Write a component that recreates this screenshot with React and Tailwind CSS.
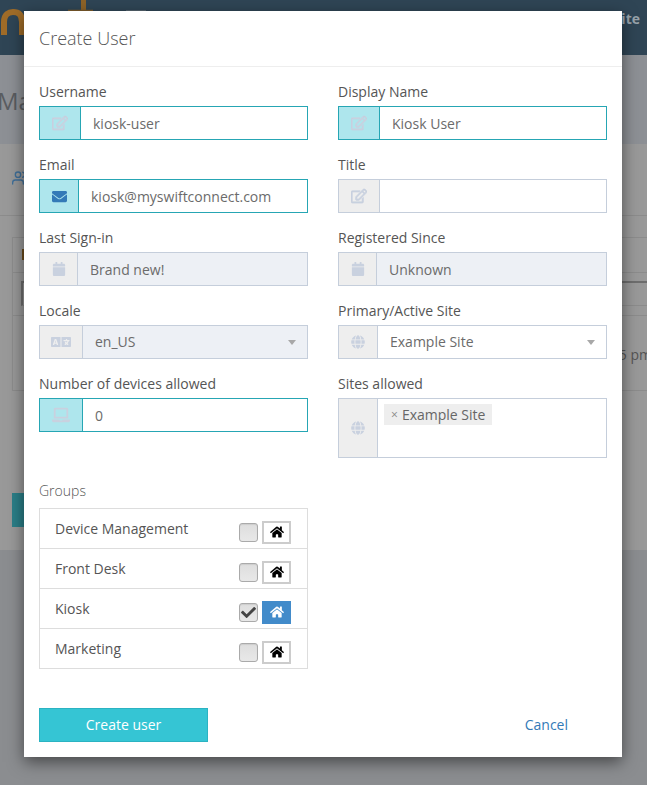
import React from "react";
import { FaRegEdit, FaEnvelope, FaCalendar, FaLanguage, FaLaptop, FaGlobe, FaHome, FaCheck } from "react-icons/fa";
import { FiUsers } from "react-icons/fi";

function Field({ label, icon, addon, value, active, disabled, select, children, tall }) {
  const border = active ? "border-[#26a6b4]" : "border-[#c5cedb]";
  return (
    <div className="flex flex-col">
      <label className="h-[21px] pt-px mb-1 text-sm leading-5 text-[#555]">{label}</label>
      <div className={`flex border ${border} ${tall ? "h-[60px]" : "h-[34px]"}`}>
        <div
          className={`flex items-center justify-center shrink-0 border-r ${border} ${active ? "bg-[#aee6ed]" : "bg-[#eeeeee]"}`}
          style={{ width: addon }}
        >
          {icon}
        </div>
        {children ? (
          children
        ) : (
          <div className={`relative flex-1 flex items-center pl-3 text-sm text-[#6b6b6b] ${select ? "" : "pt-px"} ${disabled ? "bg-[#edf0f5]" : "bg-white"}`}>
            {value}
            {select ? (
              <span className="absolute right-[11px] top-[14px] w-0 h-0 border-x-4 border-t-[5px] border-x-transparent border-t-[#a8a8a8]" />
            ) : null}
          </div>
        )}
      </div>
    </div>
  );
}

const ic = "text-[#c9d1df]";

function GroupRow({ name, checked, last }) {
  return (
    <div className={`flex items-center pl-[15px] pr-4 ${last ? "h-[39px]" : "h-10 border-b border-[#dddddd]"}`}>
      <span className="flex-1 text-sm text-[#555]">{name}</span>
      <span
        className={`flex items-center justify-center w-[19px] h-[19px] mt-[7px] rounded-[3px] border border-[#aaaaaa] bg-gradient-to-b from-[#dedede] to-[#e8e8e8] shadow-[inset_0_1px_1px_rgba(0,0,0,0.08)] mr-[4px]`}
      >
        {checked ? <FaCheck className="text-[#444] text-[15px]" /> : null}
      </span>
      <span
        className={`flex items-center justify-center w-[29px] h-[23px] mt-[7px] ${checked ? "bg-[#428bca]" : "bg-white border-2 border-[#cccccc]"}`}
      >
        <FaHome className={`text-[14px] ${checked ? "text-white" : "text-black"}`} />
      </span>
    </div>
  );
}

const thick = { stroke: "currentColor", strokeWidth: 22 };

export default function App() {
  return (
    <div className="relative w-[647px] h-[785px] overflow-hidden flex flex-col bg-[#8b8d90] font-['Open_Sans',sans-serif]">
      {/* page behind the dialog */}
      <header className="h-[55px] shrink-0 bg-[#2f4555] flex items-start justify-between overflow-hidden">
        <svg width="150" height="40" viewBox="0 0 150 40" className="shrink-0">
          <path d="M4 35V22C4 14 9 12 13 12C18 12 22 14 22 22V35" fill="none" stroke="#a06c28" strokeWidth="6" />
          <path d="M83.500 0V11" fill="none" stroke="#8d6328" strokeWidth="5" />
          <path d="M68 10.500H93" fill="none" stroke="#7d5c2c" strokeWidth="1.500" />
          <rect x="126" y="10" width="20" height="2" fill="#55636e" />
        </svg>
        <span className="mt-[9px] mr-[7px] text-sm font-bold text-[#98a3ab]">Site</span>
      </header>
      <div className="h-[89px] shrink-0 bg-[#8d9095] pt-[30px] text-2xl text-[#5a5d61] whitespace-nowrap">
        <span className="-ml-[3px] block">Ma</span>
      </div>
      <main className="h-[406px] shrink-0 bg-[#999999] flex flex-col">
        <div className="h-[72px] shrink-0 border-b border-[#8c8c8c] pl-3 pt-[26px]">
          <FiUsers className="text-[#3f6f99] text-[16px]" />
        </div>
        <div className="mt-[21px] ml-3 -mr-3 h-[154px] shrink-0 border border-[#8c8c8c] flex flex-col">
          <div className="h-[35px] shrink-0 border-b border-[#8c8c8c] pl-[9px] pt-[11px]">
            <div className="w-[4px] h-[11px] bg-[#6c4c1c]" />
          </div>
          <div className="h-[43px] shrink-0 border-b border-[#8c8c8c] pt-[8px] pl-[8px]">
            <div className="h-[25px] border-t-2 border-l-2 border-[#6e6e6e] border-b border-b-[#8c8c8c]" />
          </div>
          <div className="flex-1 flex items-start justify-end pt-[29px] pr-[6px] text-sm text-[#555]">
            <span className="whitespace-nowrap">5 pm</span>
          </div>
        </div>
        <div className="mt-[102px] ml-3 w-[40px] h-[34px] shrink-0 bg-[#2b7f88]" />
      </main>

      {/* dialog */}
      <div className="absolute left-[24px] top-[11px] w-[598px] h-[746px] bg-white shadow-[0_5px_15px_rgba(0,0,0,0.5)] flex flex-col">
        <div className="h-[56px] shrink-0 border-b border-[#eeeeee] pl-[15px] pb-[2px] flex items-center text-lg font-light text-[#555]">
          Create User
        </div>
        <div className="flex flex-col px-[15px] pt-[14px]">
          <div className="grid grid-cols-2 gap-x-[30px] gap-y-[14px] items-start">
            <Field label="Username" addon={41} active value="kiosk-user" icon={<FaRegEdit {...thick} className={`${ic} text-[16px]`} />} />
            <Field label="Display Name" addon={41} active value="Kiosk User" icon={<FaRegEdit {...thick} className={`${ic} text-[16px]`} />} />
            <Field label="Email" addon={39} active value="kiosk@myswiftconnect.com" icon={<FaEnvelope className="text-[#337ab7] text-[15px]" />} />
            <Field label="Title" addon={41} value="" icon={<FaRegEdit {...thick} className={`${ic} text-[16px]`} />} />
            <Field label="Last Sign-in" addon={38} disabled value="Brand new!" icon={<FaCalendar className={`${ic} text-[14px]`} />} />
            <Field label="Registered Since" addon={38} disabled value="Unknown" icon={<FaCalendar className={`${ic} text-[14px]`} />} />
            <Field label="Locale" addon={43} disabled select value="en_US" icon={<FaLanguage className={`${ic} text-[20px]`} />} />
            <Field label="Primary/Active Site" addon={39} select value="Example Site" icon={<FaGlobe className={`${ic} text-[14px]`} />} />
            <Field label="Number of devices allowed" addon={43} active value="0" icon={<FaLaptop className={`${ic} text-[18px]`} />} />
            <Field label="Sites allowed" addon={39} tall icon={<FaGlobe className={`${ic} text-[14px]`} />}>
              <div className="flex-1 flex items-start bg-white pl-[6px] pt-[5px]">
                <span className="flex items-center h-[21px] px-[7px] bg-[#eeeeee] text-sm text-[#666]">
                  <span className="text-xs text-[#888] mr-[4px]">×</span>Example Site
                </span>
              </div>
            </Field>
          </div>

          <div className="mt-[23px] h-5 mb-[7px] text-sm leading-5 font-light text-[#555]">Groups</div>
          <div className="w-[269px] border border-[#dddddd] flex flex-col">
            <GroupRow name="Device Management" />
            <GroupRow name="Front Desk" />
            <GroupRow name="Kiosk" checked />
            <GroupRow name="Marketing" last />
          </div>

          <div className="mt-[39px] flex items-center justify-between pr-[39px]">
            <button className="w-[169px] h-[34px] bg-[#35c5d4] border border-[#2bb3c2] text-sm text-white">Create user</button>
            <a className="text-sm text-[#337ab7]">Cancel</a>
          </div>
        </div>
      </div>
    </div>
  );
}
